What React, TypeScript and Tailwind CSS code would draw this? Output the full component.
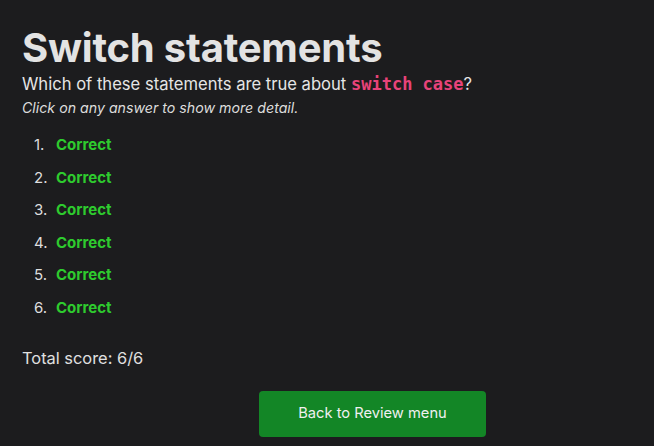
import React from 'react';

const answers = [1, 2, 3, 4, 5, 6];

export default function App() {
  return (
    <div className="min-h-screen w-full bg-[#1c1c1e] text-[#e5e5e5] px-[22px] pt-[24px]" style={{ fontFamily: 'Inter, "Noto Sans", sans-serif' }}>
      <h1 className="text-[40px] font-bold leading-[48px] tracking-[-0.2px] text-[#e3e3e3]">Switch statements</h1>
      <p className="text-[16.6px] leading-[25px] text-[#e5e5e5]">
        Which of these statements are true about{' '}
        <code className="text-[17px] font-bold text-[#e8437a]" style={{ fontFamily: '"DejaVu Sans Mono", monospace' }}>switch case</code>?
      </p>
      <p className="mt-[1px] text-[14.2px] italic leading-[20px] text-[#dcdcdc]">Click on any answer to show more detail.</p>

      <ol className="mt-[17px] flex flex-col gap-[12.5px] pl-[12px]">
        {answers.map((n) => (
          <li key={n} className="flex items-center text-[15px] leading-[20px]">
            <span className="w-[22px] text-[#dedede]">{n}.</span>
            <span className="font-bold text-[#2ecb2e]">Correct</span>
          </li>
        ))}
      </ol>

      <p className="mt-[28px] text-[16.4px] leading-[24px] text-[#e0e0e0]">Total score: 6/6</p>

      <div className="mt-[21px] flex">
        <button className="ml-[237px] h-[46px] w-[227px] rounded-[4px] bg-[#138626] text-[14.7px] text-[#f0f0f0]">
          Back to Review menu
        </button>
      </div>
    </div>
  );
}
